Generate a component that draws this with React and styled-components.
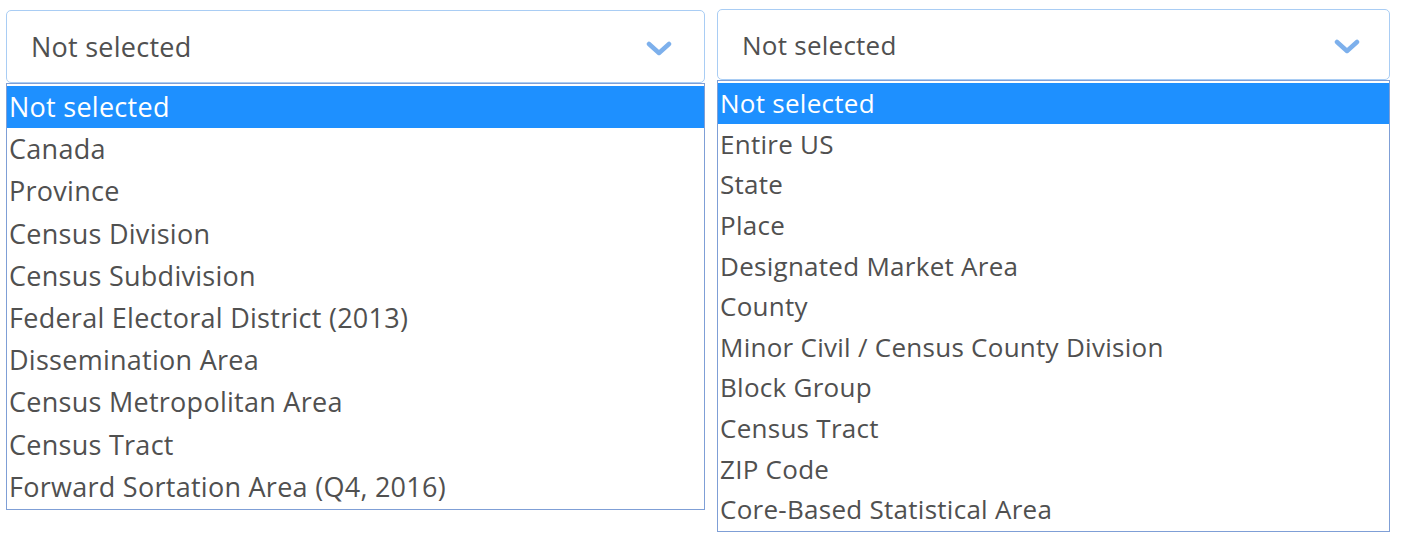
import React from "react";
import styled, { createGlobalStyle } from "styled-components";

const Global = createGlobalStyle`
  html, body { margin: 0; padding: 0; background: #ffffff; }
  body { font-family: "Open Sans", "Noto Sans", sans-serif; }
`;

const Page = styled.div`
  display: flex;
  align-items: flex-start;
  gap: 12px;
  padding: 9px 0 0 6px;
`;

const Column = styled.div`
  display: flex;
  flex-direction: column;
  width: ${(p) => p.$width}px;
  margin-top: ${(p) => p.$offset}px;
`;

const SelectBox = styled.div`
  box-sizing: border-box;
  height: ${(p) => p.$height}px;
  border: 1.5px solid #a9cdf4;
  border-radius: 5px;
  display: flex;
  align-items: center;
  justify-content: space-between;
  padding: 0 ${(p) => p.$padRight}px 0 24px;
  color: #505050;
  font-size: ${(p) => p.$size}px;
  letter-spacing: 0.25px;
  background: #fff;
`;

const Chevron = styled.svg`
  width: 26px;
  height: 16px;
  flex: none;
  margin-top: ${(p) => p.$drop}px;
`;

const List = styled.ul`
  list-style: none;
  margin: 0;
  padding: 2px 0 1px;
  border: 1.5px solid #7f9fd6;
  background: #fff;
`;

const Item = styled.li`
  height: ${(p) => p.$row}px;
  line-height: ${(p) => p.$row}px;
  padding-left: 2px;
  font-size: ${(p) => p.$size}px;
  letter-spacing: 0.27px;
  white-space: nowrap;
  color: ${(p) => (p.$active ? "#ffffff" : "#505050")};
  background: ${(p) => (p.$active ? "#1e90ff" : "transparent")};
`;

const ChevronIcon = ({ drop }) => (
  <Chevron $drop={drop} viewBox="0 0 26 16">
    <path
      d="M3 3 L13 12 L23 3"
      fill="none"
      stroke="#7db0ec"
      strokeWidth="4.5"
      strokeLinecap="round"
      strokeLinejoin="round"
    />
  </Chevron>
);

const Dropdown = ({ width, offset, height, padRight, size, row, drop, options }) => (
  <Column $width={width} $offset={offset}>
    <SelectBox $height={height} $padRight={padRight} $size={size}>
      <span>Not selected</span>
      <ChevronIcon drop={drop} />
    </SelectBox>
    <List>
      {options.map((o, i) => (
        <Item key={o} $active={i === 0} $row={row} $size={size}>
          {o}
        </Item>
      ))}
    </List>
  </Column>
);

const canada = [
  "Not selected",
  "Canada",
  "Province",
  "Census Division",
  "Census Subdivision",
  "Federal Electoral District (2013)",
  "Dissemination Area",
  "Census Metropolitan Area",
  "Census Tract",
  "Forward Sortation Area (Q4, 2016)",
];

const us = [
  "Not selected",
  "Entire US",
  "State",
  "Place",
  "Designated Market Area",
  "County",
  "Minor Civil / Census County Division",
  "Block Group",
  "Census Tract",
  "ZIP Code",
  "Core-Based Statistical Area",
];

export default function App() {
  return (
    <>
      <Global />
      <Page>
        <Dropdown
          width={699}
          offset={1}
          height={73}
          padRight={32}
          size={27}
          row={42.2}
          drop={4}
          options={canada}
        />
        <Dropdown
          width={673}
          offset={0}
          height={71}
          padRight={29}
          size={26}
          row={40.65}
          drop={4}
          options={us}
        />
      </Page>
    </>
  );
}
